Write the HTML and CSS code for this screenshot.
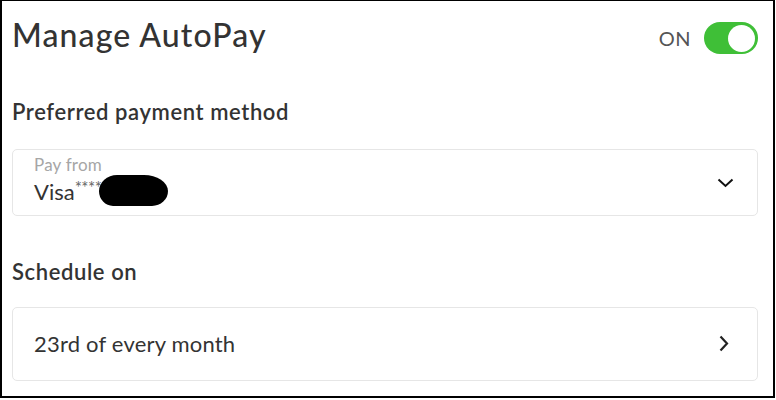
FILE: index.html
```html
<!DOCTYPE html>
<html>
<head>
<meta charset="utf-8">
<link rel="stylesheet" href="styles.css">
</head>
<body>
<div class="frame">
  <div class="header">
    <h1 class="title">Manage AutoPay</h1>
    <div class="toggle-wrap">
      <span class="toggle-label">ON</span>
      <span class="toggle"><span class="knob"></span></span>
    </div>
  </div>
  <h2 class="section-title pm">Preferred payment method</h2>
  <div class="card select">
    <div class="select-text">
      <div class="select-label">Pay from</div>
      <div class="select-value">Visa<span class="stars">****</span><span class="redact"></span></div>
    </div>
    <svg class="chev" width="17" height="10" viewBox="0 0 17 10"><path d="M1.5 1.5 L8.5 8 L15.5 1.5" fill="none" stroke="#111" stroke-width="2"/></svg>
  </div>
  <h2 class="section-title sched">Schedule on</h2>
  <div class="card row">
    <span class="row-text">23rd of every month</span>
    <svg class="chev" width="10" height="17" viewBox="0 0 10 17"><path d="M1.5 1.5 L8 8.5 L1.5 15.5" fill="none" stroke="#222" stroke-width="2.2"/></svg>
  </div>
</div>
</body>
</html>
```
FILE: styles.css
```css
* { box-sizing: border-box; }
html, body { margin: 0; padding: 0; background: #fff; }
body { font-family: "Lato", "Open Sans", sans-serif; color: #333; }
.frame {
  width: 775px;
  height: 398px;
  border-top: 1px solid #000;
  border-left: 2px solid #000;
  border-right: 2px solid #000;
  border-bottom: 2px solid #000;
  padding: 15px 15px 0 10px;
}
.header {
  display: flex;
  align-items: flex-start;
  justify-content: space-between;
}
.title {
  margin: 0;
  font-size: 32px;
  line-height: 38px;
  font-weight: 500;
  color: #333;
  letter-spacing: 1.1px;
}
.toggle-wrap { display: flex; align-items: center; gap: 13px; margin-top: 6px; }
.toggle-label { font-size: 20px; color: #555; letter-spacing: 0.5px; font-weight: 400; }
.toggle {
  width: 54px; height: 32px; border-radius: 16px;
  background: #3fbf37;
  display: flex; align-items: center; justify-content: flex-end;
  padding-right: 3px;
}
.knob { width: 27px; height: 27px; border-radius: 50%; background: #fff; }
.section-title {
  margin: 0;
  font-size: 22px;
  font-weight: 600;
  color: #333;
  line-height: 26px;
  letter-spacing: 0.6px;
}
.pm { margin-top: 45px; }
.sched { margin-top: 43px; }
.card {
  border: 1px solid #e6e6e6;
  border-radius: 5px;
  display: flex;
  align-items: center;
  justify-content: space-between;
  padding: 0 23px 0 21px;
}
.select { height: 67px; margin-top: 24px; align-items: flex-start; padding-top: 5px; }
.select .chev { margin-top: 23px; }
.select-text { display: flex; flex-direction: column; }
.select-label { font-size: 17px; color: #a6a6a6; line-height: 19px; letter-spacing: 0.2px; }
.select-value { font-size: 22px; color: #333; line-height: 26px; margin-top: 5px; display: flex; align-items: flex-start; }
.stars { font-size: 17px; color: #666; line-height: 14px; margin-top: 2px; letter-spacing: -0.5px; }
.redact {
  display: inline-block; width: 69px; height: 31px; background: #000;
  border-radius: 18px 24px 16px 14px / 16px 16px 15px 15px; margin-left: -3px; margin-top: -4px;
}
.row { height: 74px; margin-top: 22px; padding-right: 28px; padding-bottom: 2px; }
.row-text { font-size: 22px; color: #333; letter-spacing: 0.2px; }
```
